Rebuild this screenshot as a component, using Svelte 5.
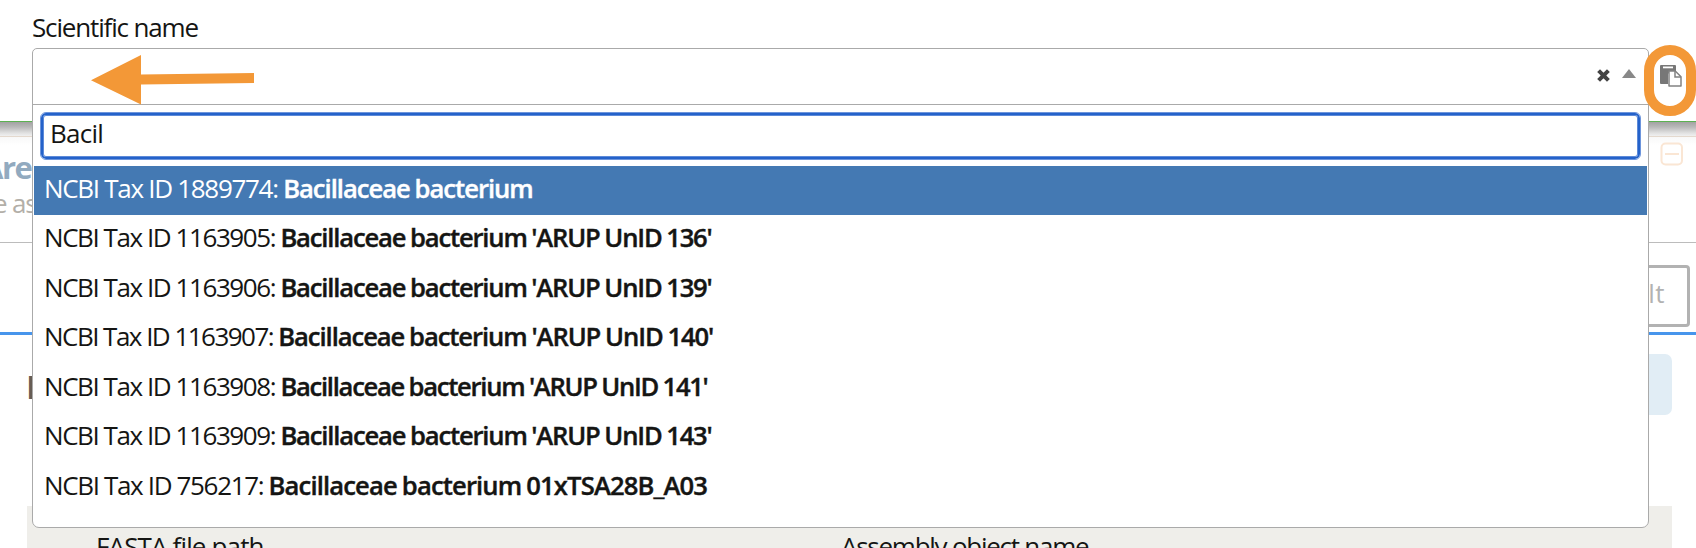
<script>
  // idTracking and nameTracking tighten each part of the row, in px.
  const results = [
    { id: '1889774', name: 'Bacillaceae bacterium', idTracking: -1.3, nameTracking: -1.01 },
    { id: '1163905', name: "Bacillaceae bacterium 'ARUP UnID 136'", idTracking: -1.43, nameTracking: -1.17 },
    { id: '1163906', name: "Bacillaceae bacterium 'ARUP UnID 139'", idTracking: -1.43, nameTracking: -1.17 },
    { id: '1163907', name: "Bacillaceae bacterium 'ARUP UnID 140'", idTracking: -1.53, nameTracking: -1.07 },
    { id: '1163908', name: "Bacillaceae bacterium 'ARUP UnID 141'", idTracking: -1.43, nameTracking: -1.28 },
    { id: '1163909', name: "Bacillaceae bacterium 'ARUP UnID 143'", idTracking: -1.43, nameTracking: -1.17 },
    { id: '756217', name: 'Bacillaceae bacterium 01xTSA28B_A03', idTracking: -1.35, nameTracking: -0.86 }
  ];
  const selected = 0;
</script>

<div class="screen">
  <div class="page">
    <div class="shade"></div>
    <header class="area">
      <div>
        <div class="area-title">Area</div>
        <div class="area-sub">e as</div>
      </div>
      <svg class="minus" width="24" height="24" viewBox="0 0 24 24" fill="none" stroke="#fae6d4" stroke-width="2">
        <rect x="1.5" y="1.5" width="20.5" height="21" rx="4" />
        <path d="M5 12h14" />
      </svg>
    </header>
    <div class="toolbar"><div class="result">Result</div></div>
    <div class="band"><b>I</b><div class="notice"></div></div>
    <div class="params">
      <span class="fasta">FASTA file path</span>
      <span class="assembly">Assembly object name</span>
    </div>
  </div>

  <div class="front">
    <div class="label">Scientific name</div>
    <div class="select">
      <div class="selection">
        <svg width="13" height="13" viewBox="0 0 13 13" stroke="#444" stroke-width="4">
          <path d="M1.6 1.6l9.8 9.8M11.4 1.6L1.6 11.4" />
        </svg>
        <svg width="14" height="9" viewBox="0 0 14 9" fill="#888"><path d="M7 0l7 9H0z" /></svg>
      </div>
      <div class="search">Bacil</div>
      <ul>
        {#each results as r, i}
          <li class:active={i === selected}>
            <span style:letter-spacing="{r.idTracking}px">{`NCBI Tax ID ${r.id}: `}</span><b style:letter-spacing="{r.nameTracking}px">{r.name}</b>
          </li>
        {/each}
      </ul>
    </div>
  </div>

  <svg class="paste" width="22" height="22" viewBox="0 0 22 22">
    <path d="M1 0h14q1 0 1 1v5H11L8 9v10H1q-1 0-1-1V1q0-1 1-1z" fill="#777" />
    <path d="M3 2.4h10" stroke="#fff" stroke-width="1.8" />
    <path d="M9 6h6.2l5.8 5.8V21H9z" fill="#fff" stroke="#828282" stroke-width="1.5" stroke-linejoin="round" />
    <path d="M15 6v6h6" fill="none" stroke="#828282" stroke-width="1.5" />
  </svg>
  <div class="ring"></div>
  <svg class="arrow" width="164" height="52" viewBox="0 0 164 52" fill="#f39837">
    <path d="M0 26.3L50 1v19.5l113-1.5v10l-113 1.5V50.5z" />
  </svg>
</div>

<style>
  .screen {
    position: relative;
    width: 1696px;
    height: 548px;
    overflow: hidden;
    background: #fff;
    color: #151513;
    font: 26px/36px 'Open Sans', sans-serif;
    letter-spacing: -1.15px;
  }
  .page {
    box-sizing: border-box;
    height: 548px;
    padding-top: 121px;
    display: flex;
    flex-direction: column;
  }
  .shade {
    box-sizing: border-box;
    flex: 0 0 16px;
    border-top: 1px solid #5cb251;
    border-bottom: 1px solid #e4d9ce;
    background: linear-gradient(#a2a2a2, #b8b8b8 35%, #e2e2e2 80%, #f0f0f0);
  }
  .area {
    box-sizing: border-box;
    flex: 0 0 106px;
    display: flex;
    justify-content: space-between;
    padding: 12px 12px 0 0;
    border-bottom: 1px solid #bcbcbc;
    background: linear-gradient(#f8f8f8, #fff 8px);
  }
  .area-title {
    margin-left: -18px;
    font-size: 31px;
    line-height: 36px;
    font-weight: 700;
    letter-spacing: -1.5px;
    color: #92aabf;
  }
  .area-sub { margin-left: -7px; line-height: 36px; color: #b3afa8; }
  .minus { margin-top: -7px; }
  .toolbar {
    box-sizing: border-box;
    flex: 0 0 92px;
    display: flex;
    justify-content: flex-end;
    padding: 22px 6px 5px 0;
    border-bottom: 3px solid #4795ec;
  }
  .result {
    box-sizing: border-box;
    height: 62px;
    padding: 7px 22px 0 30px;
    border: 3px solid #b2b2b2;
    border-radius: 4px;
    color: #b2b2b2;
    letter-spacing: 0.4px;
    font-weight: 500;
  }
  .band {
    flex: 0 0 171px;
    display: flex;
    justify-content: space-between;
    padding: 0 24px 0 26px;
  }
  .band b { margin-top: 32px; font-size: 33px; line-height: 40px; color: #665d55; }
  .notice { width: 400px; height: 61px; margin-top: 19px; border-radius: 7px; background: #e1edf5; }
  .params {
    flex: 1;
    display: flex;
    margin: 0 24px 0 27px;
    padding: 22px 0 0 69px;
    background: #efeeea;
  }
  .params .fasta { width: 745px; letter-spacing: -0.85px; }
  .params .assembly { letter-spacing: -1.25px; }
  .front { position: absolute; left: 32px; top: 0; width: 1617px; }
  .label { height: 48px; padding-top: 9px; box-sizing: border-box; }
  .select {
    box-sizing: border-box;
    height: 480px;
    border: 1px solid #aaa;
    border-radius: 5px 5px 7px 7px;
    background: #fff;
  }
  .selection {
    height: 56px;
    display: flex;
    justify-content: flex-end;
    align-items: flex-start;
    gap: 12px;
    padding: 20px 12px 0 0;
    box-sizing: border-box;
    border-bottom: 1px solid #aaa;
  }
  .selection svg { display: block; }
  .search {
    box-sizing: border-box;
    height: 46px;
    margin: 8px 8px 7px;
    padding: 0 7px;
    border: 2px solid #2462ca;
    outline: 1px solid #6d95dc;
    box-shadow: inset 0 0 0 1px #5d8ad8;
    border-radius: 5px;
    line-height: 37px;
    letter-spacing: -0.75px;
  }
  ul { margin: 0; padding: 0 1px; list-style: none; }
  li { height: 49.5px; padding-left: 10px; line-height: 45px; white-space: nowrap; }
  li span { white-space: pre; }
  li b { font-size: 25.6px; font-weight: 600; word-spacing: -0.8px; -webkit-text-stroke: 0.4px currentColor; }
  li.active { height: 49px; background: #4479b3; color: #fff; }
  .paste { position: absolute; left: 1659.5px; top: 65px; }
  .ring {
    position: absolute;
    left: 1644px;
    top: 45px;
    box-sizing: border-box;
    width: 52px;
    height: 71px;
    border: 10px solid #f39837;
    border-radius: 26px;
  }
  .arrow { position: absolute; left: 91px; top: 54px; }
</style>
